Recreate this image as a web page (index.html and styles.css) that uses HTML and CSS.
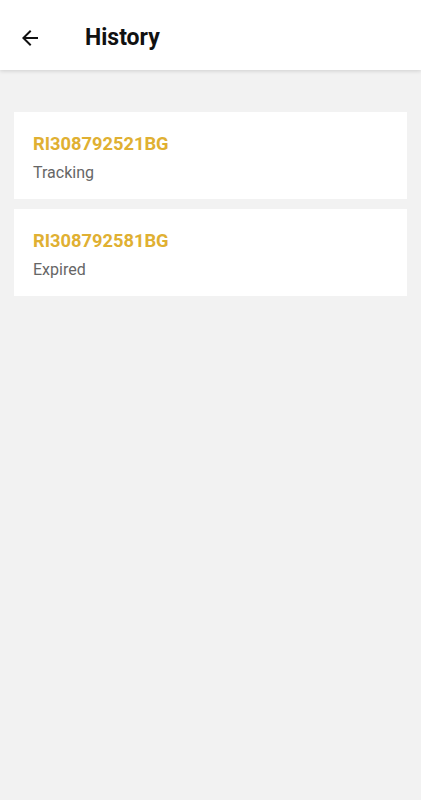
FILE: index.html
```html
<!DOCTYPE html>
<html lang="en">
  <head>
    <meta charset="UTF-8" />
    <meta name="viewport" content="width=device-width, initial-scale=1.0" />
    <title>History</title>
    <link rel="stylesheet" href="styles.css">
  </head>
  <body>
    <header class="app-bar">
      <button class="back-btn" aria-label="Back">
        <svg width="24" height="24" viewBox="0 0 24 24">
          <path d="M20 11H7.83l5.59-5.59L12 4l-8 8 8 8 1.41-1.41L7.83 13H20v-2z" fill="#111" />
        </svg>
      </button>
      <h1>History</h1>
    </header>

    <main class="history-list">
      <div class="history-item">
        <div class="code">RI308792521BG</div>
        <div class="status">Tracking</div>
      </div>
      <div class="history-item">
        <div class="code">RI308792581BG</div>
        <div class="status">Expired</div>
      </div>
    </main>
  </body>
</html>
```

FILE: styles.css
```css
body {
  margin: 0;
  font-family: Roboto, "Noto Sans", sans-serif;
  background-color: #f2f2f2;
  min-height: 100vh;
}
.app-bar {
  height: 70px;
  box-sizing: border-box;
  padding: 5px 0 0 18px;
  background-color: #fff;
  display: flex;
  align-items: center;
  box-shadow: 0 1px 4px rgba(0, 0, 0, 0.15);
}
.back-btn {
  border: none;
  background: none;
  padding: 0;
  width: 24px;
  height: 24px;
  display: flex;
}
h1 {
  margin: 0 0 0 43px;
  font-size: 23px;
  font-weight: bold;
  color: #111;
}
.history-list {
  padding: 42px 14px;
  display: flex;
  flex-direction: column;
  gap: 10px;
}
.history-item {
  background-color: #fff;
  height: 87px;
  padding: 3px 19px 0;
  display: flex;
  flex-direction: column;
  justify-content: center;
  gap: 9px;
  box-sizing: border-box;
}
.code {
  color: #e0b032;
  font-size: 18.3px;
  font-weight: bold;
}
.status {
  color: #666;
  font-size: 16px;
}
```
